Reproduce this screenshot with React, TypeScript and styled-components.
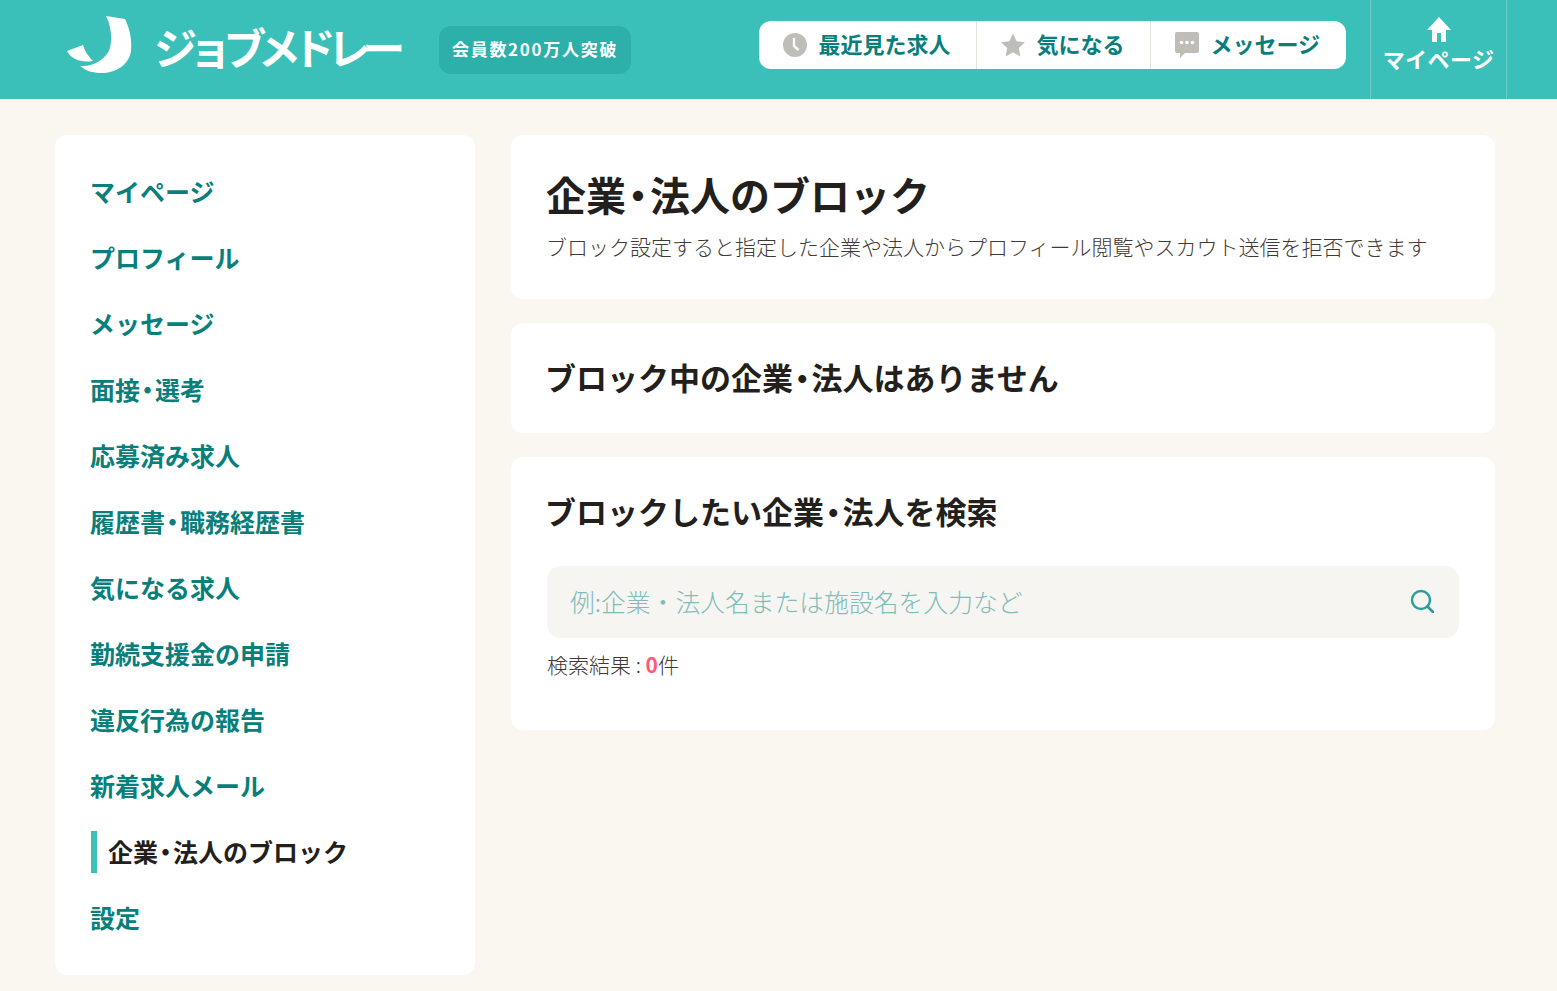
import styled, { createGlobalStyle } from "styled-components";

const GlobalStyle = createGlobalStyle`
    html, body {
        margin: 0;
        padding: 0;
        background: #faf6f0;
        font-family: "Noto Sans CJK JP", "Noto Sans", sans-serif;
        color: #231f1c;
    }
    * {
        box-sizing: border-box;
    }
`

const navItems = [
    "マイページ",
    "プロフィール",
    "メッセージ",
    "面接・選考",
    "応募済み求人",
    "履歴書・職務経歴書",
    "気になる求人",
    "勤続支援金の申請",
    "違反行為の報告",
    "新着求人メール",
    "企業・法人のブロック",
    "設定",
];

// the narrow middle dot of the original font
const withDots = (text: string) =>
    text.split("・").flatMap((part, i) => (i === 0 ? [part] : [<Dot key={i}>・</Dot>, part]));

const Logo = () => (
    <LogoMark viewBox="0 0 67 60" width="67" height="60">
        <path fill="#fff" d="M40 1 L59 4 C64 14 66 26 65 36 C63 50 50 58 35 58 C27 58 20 56 14 51 C26 52 37 46 43 36 C47 26 45 10 40 1Z"/>
        <path fill="#fff" d="M1 36 L17 30 C19 37 23 42 27 46 C15 48 5 44 1 36Z"/>
    </LogoMark>
);

const ClockIcon = () => (
    <svg viewBox="0 0 24 24" width="24" height="24">
        <circle cx="12" cy="12" r="12" fill="#bfbdb8"/>
        <path d="M11 5 V13 L15.5 17" fill="none" stroke="#fff" strokeWidth="2.4"/>
    </svg>
);

const StarIcon = () => (
    <svg viewBox="0 0 24 24" width="24" height="24">
        <path fill="#bfbdb8" d="M12 .5 L15.6 8.2 L24 9.3 L17.8 15 L19.4 23.5 L12 19.3 L4.6 23.5 L6.2 15 L0 9.3 L8.4 8.2Z"/>
    </svg>
);

const ChatIcon = () => (
    <svg viewBox="0 0 24 26" width="24" height="26">
        <path fill="#bfbdb8" d="M2 0 H22 A2 2 0 0 1 24 2 V19 A2 2 0 0 1 22 21 H10 L5 26 V21 H2 A2 2 0 0 1 0 19 V2 A2 2 0 0 1 2 0Z"/>
        <circle cx="6.5" cy="10.5" r="1.8" fill="#fff"/>
        <circle cx="12" cy="10.5" r="1.8" fill="#fff"/>
        <circle cx="17.5" cy="10.5" r="1.8" fill="#fff"/>
    </svg>
);

const HomeIcon = () => (
    <svg viewBox="0 0 24 26" width="24" height="26">
        <path fill="#fff" d="M12 0 L24 13 H19 V25 H14 V16 H10 V25 H5 V13 H0Z"/>
    </svg>
);

const SearchIcon = () => (
    <svg viewBox="0 0 24 24" width="24" height="24">
        <circle cx="11" cy="11" r="9" fill="none" stroke="#2a9d98" strokeWidth="2.4"/>
        <path d="M17.5 17.5 L23 23" fill="none" stroke="#2a9d98" strokeWidth="2.6" strokeLinecap="round"/>
    </svg>
);

export default function App() {
    return (
        <>
            <GlobalStyle/>
            <Header>
                <Brand>
                    <Logo/>
                    <BrandName>ジョブメドレー</BrandName>
                    <Badge>会員数200万人突破</Badge>
                </Brand>
                <HeaderRight>
                    <Pill>
                        <PillItem><ClockIcon/><PillLabel>最近見た求人</PillLabel></PillItem>
                        <PillItem><StarIcon/><PillLabel>気になる</PillLabel></PillItem>
                        <PillItem><ChatIcon/><PillLabel>メッセージ</PillLabel></PillItem>
                    </Pill>
                    <MyPage>
                        <HomeIcon/>
                        <MyPageLabel>マイページ</MyPageLabel>
                    </MyPage>
                </HeaderRight>
            </Header>
            <Page>
                <Sidebar>
                    {navItems.map((item) => (
                        <NavRow key={item} $active={item === "企業・法人のブロック"}>
                            {withDots(item)}
                        </NavRow>
                    ))}
                </Sidebar>
                <Main>
                    <TitleCard>
                        <Title>{withDots("企業・法人のブロック")}</Title>
                        <Lead>ブロック設定すると指定した企業や法人からプロフィール閲覧やスカウト送信を拒否できます</Lead>
                    </TitleCard>
                    <EmptyCard>
                        <Heading>{withDots("ブロック中の企業・法人はありません")}</Heading>
                    </EmptyCard>
                    <SearchCard>
                        <Heading>{withDots("ブロックしたい企業・法人を検索")}</Heading>
                        <SearchBox>
                            <SearchInput placeholder="例:企業・法人名または施設名を入力など"/>
                            <SearchIcon/>
                        </SearchBox>
                        <ResultLine>検索結果 : <Count>0</Count>件</ResultLine>
                    </SearchCard>
                </Main>
            </Page>
        </>
    );
}

const Header = styled.header`
    display: flex;
    justify-content: space-between;
    height: 99px;
    padding: 0 50px 0 66px;
    background-color: #3ac0b9;
`
const Brand = styled.div`
    display: flex;
    align-items: center;
`
const LogoMark = styled.svg`
    margin-top: -9px;
`
const BrandName = styled.div`
    width: 247px;
    margin: -6px 0 0 21px;
    font-size: 43px;
    font-weight: 700;
    line-height: 1;
    letter-spacing: -8.3px;
    color: #fff;
    white-space: nowrap;
`
const Badge = styled.div`
    display: flex;
    align-items: center;
    height: 48px;
    margin-left: 38px;
    padding: 0 13px 3px;
    border-radius: 12px;
    background-color: #2db0a9;
    font-size: 17px;
    font-weight: 700;
    letter-spacing: 1.7px;
    color: #fff;
    white-space: nowrap;
`
const HeaderRight = styled.div`
    display: flex;
    align-items: flex-start;
    gap: 24px;
`
const Pill = styled.nav`
    display: flex;
    height: 48px;
    margin-top: 21px;
    border-radius: 12px;
    background-color: #fff;
`
const PillItem = styled.a`
    display: flex;
    align-items: center;
    gap: 11px;
    padding: 0 26px 0 24px;
    font-size: 22px;
    font-weight: 700;
    color: #087f7b;
    white-space: nowrap;
    & + & {
        border-left: 1px solid #e4e2dd;
    }
`
const PillLabel = styled.span`
    margin-bottom: 4px;
`
const MyPage = styled.a`
    display: flex;
    flex-direction: column;
    align-items: center;
    width: 137px;
    height: 99px;
    padding-top: 17px;
    border-left: 1px solid #6fd0cb;
    border-right: 1px solid #6fd0cb;
`
const MyPageLabel = styled.span`
    font-size: 22px;
    font-weight: 700;
    line-height: 30px;
    letter-spacing: .4px;
    color: #fff;
`
const Page = styled.div`
    display: flex;
    align-items: flex-start;
    gap: 36px;
    padding: 36px 62px 16px 55px;
`
const Sidebar = styled.aside`
    flex: 0 0 420px;
    display: flex;
    flex-direction: column;
    gap: 24px;
    height: 840px;
    padding: 36px 36px 0 35px;
    border-radius: 12px;
    background-color: #fff;
`
const NavRow = styled.a<{ $active: boolean }>`
    display: block;
    height: 42px;
    font-size: 25px;
    font-weight: 700;
    line-height: 40px;
    white-space: nowrap;
    color: ${({$active}) => ($active ? "#231f1c" : "#087f7b")};
    border-left: ${({$active}) => ($active ? "6px solid #3ac0b9" : "none")};
    margin-left: ${({$active}) => ($active ? "1px" : "0")};
    padding-left: ${({$active}) => ($active ? "11px" : "0")};
`
// palt gives the dot its proportional width, as the original font has it
const Dot = styled.span`
    font-feature-settings: "palt";
    padding: 0 .05em;
`
const Main = styled.main`
    flex: 1;
    display: flex;
    flex-direction: column;
    gap: 24px;
`
const Card = styled.section`
    padding: 0 36px;
    border-radius: 12px;
    background-color: #fff;
`
const TitleCard = styled(Card)`
    height: 164px;
    padding-top: 31px;
`
const Title = styled.h1`
    margin: 0;
    font-size: 40px;
    font-weight: 700;
    line-height: 56px;
    margin-left: -1px;
`
const Lead = styled.p`
    margin: 8px 0 0 -1px;
    font-size: 21px;
    font-weight: 300;
    line-height: 32px;
    color: #3f3a36;
    white-space: nowrap;
`
const EmptyCard = styled(Card)`
    display: flex;
    align-items: center;
    height: 110px;
    padding-bottom: 2px;
`
const Heading = styled.h2`
    margin: 0 0 0 -2px;
    font-size: 31px;
    font-weight: 700;
    line-height: 44px;
`
const SearchCard = styled(Card)`
    height: 273px;
    padding-top: 32px;
`
const SearchBox = styled.div`
    display: flex;
    align-items: center;
    height: 72px;
    margin-top: 33px;
    padding: 0 25px 2px 23px;
    border-radius: 14px;
    background-color: #f6f5f1;
`
const SearchInput = styled.input`
    flex: 1;
    border: 0;
    outline: 0;
    padding: 0;
    background: transparent;
    font-family: inherit;
    font-size: 24.8px;
    font-weight: 300;
    &::placeholder {
        color: #7fbcba;
        opacity: 1;
    }
`
const ResultLine = styled.p`
    margin: 10px 0 0;
    font-size: 21px;
    font-weight: 300;
    line-height: 32px;
    color: #3f3a36;
`
const Count = styled.span`
    font-weight: 700;
    color: #ff5a79;
`
